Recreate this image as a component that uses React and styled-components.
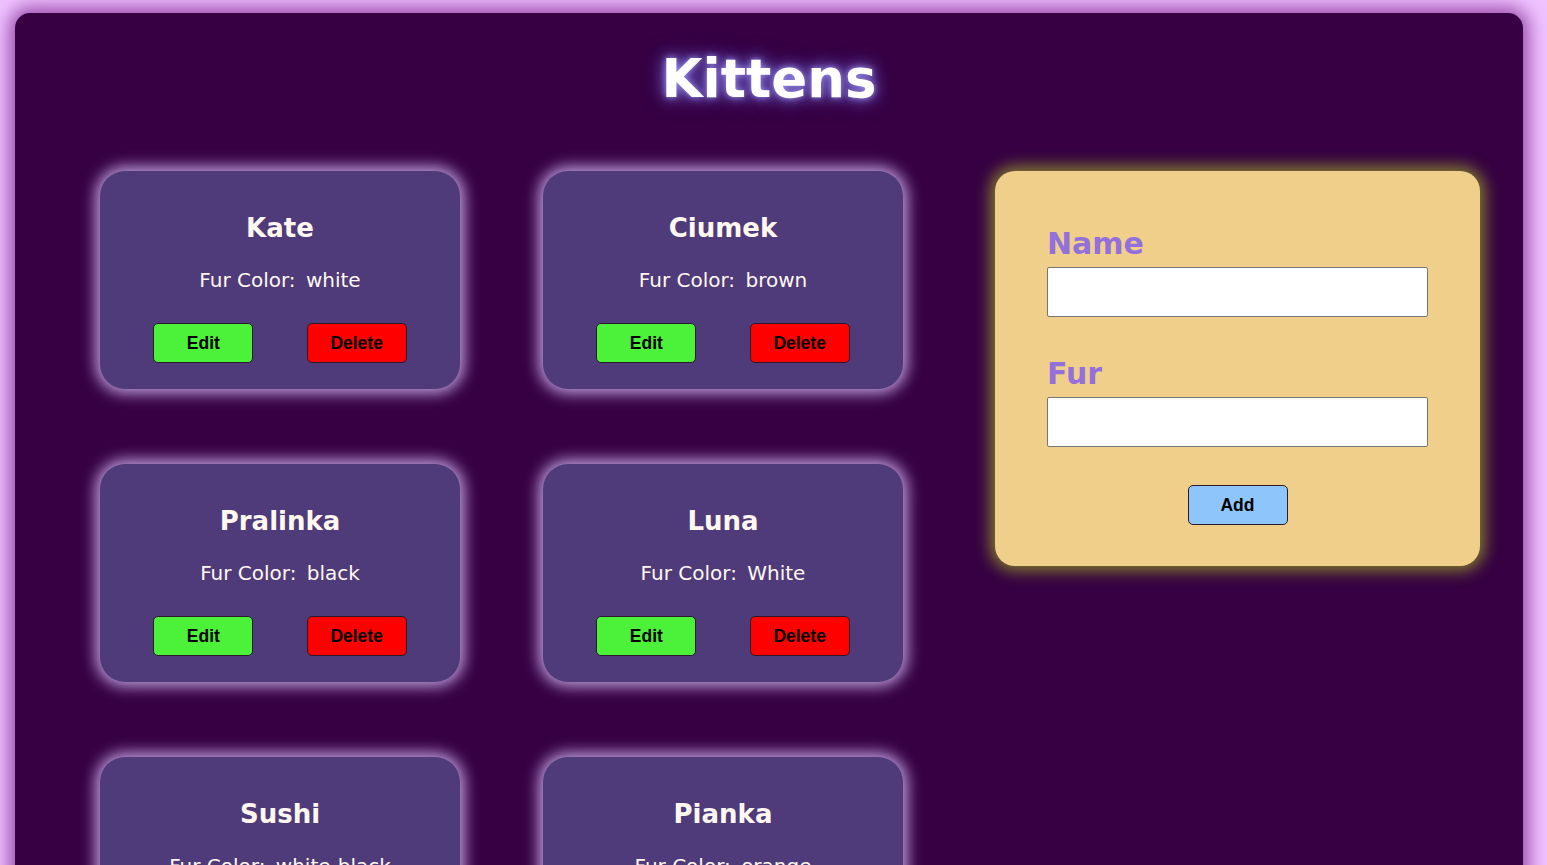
import React from "react";
import styled, { createGlobalStyle } from "styled-components";

const Global = createGlobalStyle`
  html, body { margin: 0; padding: 0; }
  body {
    background: #efc3ff;
    font-family: "DejaVu Sans", Verdana, sans-serif;
  }
  ::-webkit-scrollbar { display: none; }
`;

const Page = styled.div`
  padding: 13px 24px 40px 15px;
`;

const Container = styled.main`
  background: #360042;
  border-radius: 15px;
  box-shadow: 0 0 18px 6px #9c4cae;
  padding: 35px 0 70px 85px;
`;

const Title = styled.h1`
  margin: 0 0 61px;
  text-align: center;
  padding-right: 85px;
  color: #ffffff;
  font-size: 53px;
  line-height: 62px;
  font-weight: bold;
  text-shadow: 0 0 6px #9a8ee6, 0 0 14px #7568d0, 0 0 22px #5f50bc;
`;

const Layout = styled.div`
  display: flex;
  align-items: flex-start;
  gap: 92px;
`;

const Grid = styled.div`
  display: grid;
  grid-template-columns: 360px 360px;
  column-gap: 83px;
  row-gap: 75px;
`;

const Card = styled.div`
  width: 360px;
  box-sizing: border-box;
  background: #4f3b79;
  border-radius: 25px;
  box-shadow: 0 0 15px 4px #c4a6e4;
  padding: 42px 0 26px;
  display: flex;
  flex-direction: column;
  align-items: center;
`;

const Name = styled.h2`
  margin: 0 0 25px;
  color: #fff8f0;
  font-size: 26px;
  line-height: 30px;
  font-weight: bold;
`;

const Fur = styled.p`
  margin: 0 0 31px;
  color: #fff8f0;
  font-size: 20px;
  line-height: 24px;
`;

const FurValue = styled.span`
  margin-left: 4px;
`;

const Buttons = styled.div`
  align-self: stretch;
  display: flex;
  justify-content: space-evenly;
`;

const Btn = styled.button`
  width: 100px;
  height: 40px;
  box-sizing: border-box;
  border: 1px solid #2a1a2a;
  border-radius: 5px;
  background: ${(p) => p.$bg};
  color: #000;
  font-family: "Liberation Sans", Arial, sans-serif;
  font-weight: bold;
  font-size: 17.5px;
  padding: 0;
  cursor: pointer;
`;

const Form = styled.form`
  width: 485px;
  box-sizing: border-box;
  background: #f0cf8b;
  border-radius: 20px;
  box-shadow: 0 0 15px 5px #7f7a2e;
  padding: 55px 52px 41px;
  display: flex;
  flex-direction: column;
`;

const Label = styled.label`
  display: block;
  color: #9370db;
  font-size: 30px;
  line-height: 36px;
  font-weight: bold;
  margin: ${(p) => (p.$first ? "0" : "39px")} 0 5px;
`;

const Input = styled.input`
  display: block;
  width: 381px;
  height: 50px;
  box-sizing: border-box;
  border: 1px solid #767676;
  border-radius: 2px;
  background: #fff;
  font-size: 18px;
  padding: 0 8px;
`;

const AddRow = styled.div`
  display: flex;
  justify-content: center;
  margin-top: 38px;
`;

const kittens = [
  { name: "Kate", fur: "white" },
  { name: "Ciumek", fur: "brown" },
  { name: "Pralinka", fur: "black" },
  { name: "Luna", fur: "White" },
  { name: "Sushi", fur: "white-black" },
  { name: "Pianka", fur: "orange" },
];

export default function App() {
  return (
    <>
      <Global />
      <Page>
        <Container>
          <Title>Kittens</Title>
          <Layout>
            <Grid>
              {kittens.map((k) => (
                <Card key={k.name}>
                  <Name>{k.name}</Name>
                  <Fur>
                    Fur Color: <FurValue>{k.fur}</FurValue>
                  </Fur>
                  <Buttons>
                    <Btn $bg="#4cf23a">Edit</Btn>
                    <Btn $bg="#ff0000">Delete</Btn>
                  </Buttons>
                </Card>
              ))}
            </Grid>
            <Form onSubmit={(e) => e.preventDefault()}>
              <Label $first htmlFor="name">Name</Label>
              <Input id="name" type="text" />
              <Label htmlFor="fur">Fur</Label>
              <Input id="fur" type="text" />
              <AddRow>
                <Btn type="submit" $bg="#8ec6fc">Add</Btn>
              </AddRow>
            </Form>
          </Layout>
        </Container>
      </Page>
    </>
  );
}
